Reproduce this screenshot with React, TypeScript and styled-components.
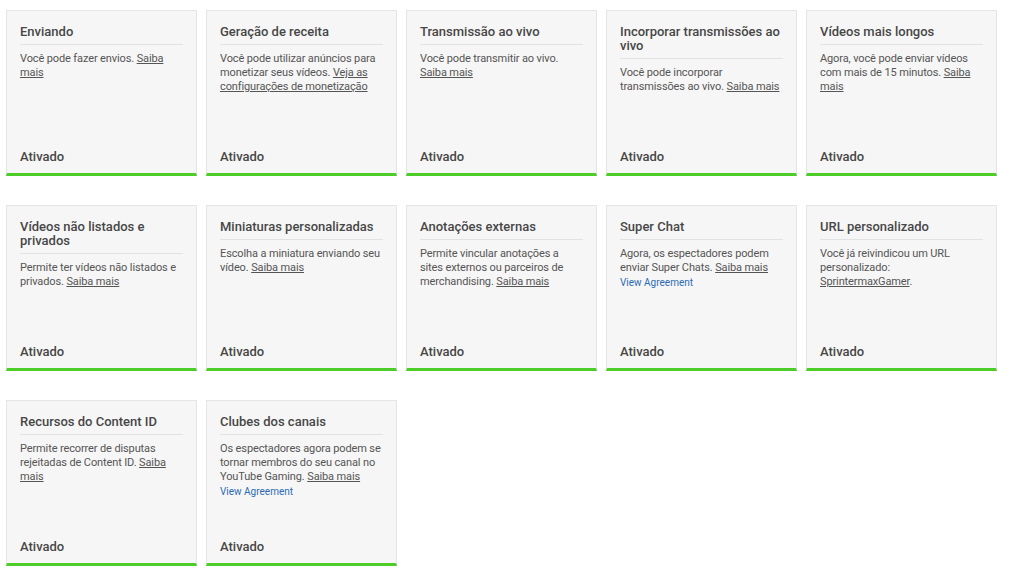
import React from "react";
import styled, { createGlobalStyle } from "styled-components";

const Global = createGlobalStyle`
  html, body { margin: 0; padding: 0; background: #ffffff; }
  body { font-family: Roboto, "Noto Sans", Arial, sans-serif; -webkit-font-smoothing: antialiased; }
  * { box-sizing: border-box; }
`;

const Grid = styled.div`
  display: grid;
  grid-template-columns: repeat(5, 191px);
  grid-auto-rows: 166px;
  column-gap: 9px;
  row-gap: 29px;
  padding: 10px 0 0 6px;
`;

const Card = styled.div`
  display: flex;
  flex-direction: column;
  background: #f6f6f6;
  border: 1px solid #e5e5e5;
  border-bottom: 3px solid #4ccd28;
  padding: 14px 13px 9px 13px;
`;

const Title = styled.div`
  font-size: 13px;
  line-height: 14px;
  font-weight: 500;
  color: #474747;
  padding-bottom: 5px;
  border-bottom: 1px solid #e2e2e2;
`;

const Desc = styled.div`
  margin-top: 7px;
  font-size: 11px;
  line-height: 14px;
  letter-spacing: -0.12px;
  color: #555555;
  flex: 1;
`;

const Link = styled.a`
  color: #555555;
  text-decoration: underline;
`;

const Agreement = styled.a`
  display: block;
  margin-top: 1px;
  font-size: 10px;
  line-height: 14px;
  letter-spacing: 0;
  color: #2b6bb5;
  text-decoration: none;
`;

const Status = styled.div`
  font-size: 13px;
  line-height: 15px;
  font-weight: 500;
  color: #474747;
`;

type Item = { title: string; body: React.ReactNode; agreement?: boolean };

const items: Item[] = [
  { title: "Enviando", body: <>Você pode fazer envios. <Link>Saiba mais</Link></> },
  { title: "Geração de receita", body: <>Você pode utilizar anúncios para monetizar seus vídeos. <Link>Veja as configurações de monetização</Link></> },
  { title: "Transmissão ao vivo", body: <>Você pode transmitir ao vivo. <Link>Saiba mais</Link></> },
  { title: "Incorporar transmissões ao vivo", body: <>Você pode incorporar transmissões ao vivo. <Link>Saiba mais</Link></> },
  { title: "Vídeos mais longos", body: <>Agora, você pode enviar vídeos com mais de 15 minutos. <Link>Saiba mais</Link></> },
  { title: "Vídeos não listados e privados", body: <>Permite ter vídeos não listados e privados. <Link>Saiba mais</Link></> },
  { title: "Miniaturas personalizadas", body: <>Escolha a miniatura enviando seu vídeo. <Link>Saiba mais</Link></> },
  { title: "Anotações externas", body: <>Permite vincular anotações a sites externos ou parceiros de merchandising. <Link>Saiba mais</Link></> },
  { title: "Super Chat", body: <>Agora, os espectadores podem enviar Super Chats. <Link>Saiba mais</Link></>, agreement: true },
  { title: "URL personalizado", body: <>Você já reivindicou um URL personalizado: <Link>SprintermaxGamer</Link>.</> },
  { title: "Recursos do Content ID", body: <>Permite recorrer de disputas rejeitadas de Content ID. <Link>Saiba mais</Link></> },
  { title: "Clubes dos canais", body: <>Os espectadores agora podem se tornar membros do seu canal no YouTube Gaming. <Link>Saiba mais</Link></>, agreement: true },
];

export default function App() {
  return (
    <>
      <Global />
      <Grid>
        {items.map((it) => (
          <Card key={it.title}>
            <Title>{it.title}</Title>
            <Desc>
              {it.body}
              {it.agreement && <Agreement>View Agreement</Agreement>}
            </Desc>
            <Status>Ativado</Status>
          </Card>
        ))}
      </Grid>
    </>
  );
}
